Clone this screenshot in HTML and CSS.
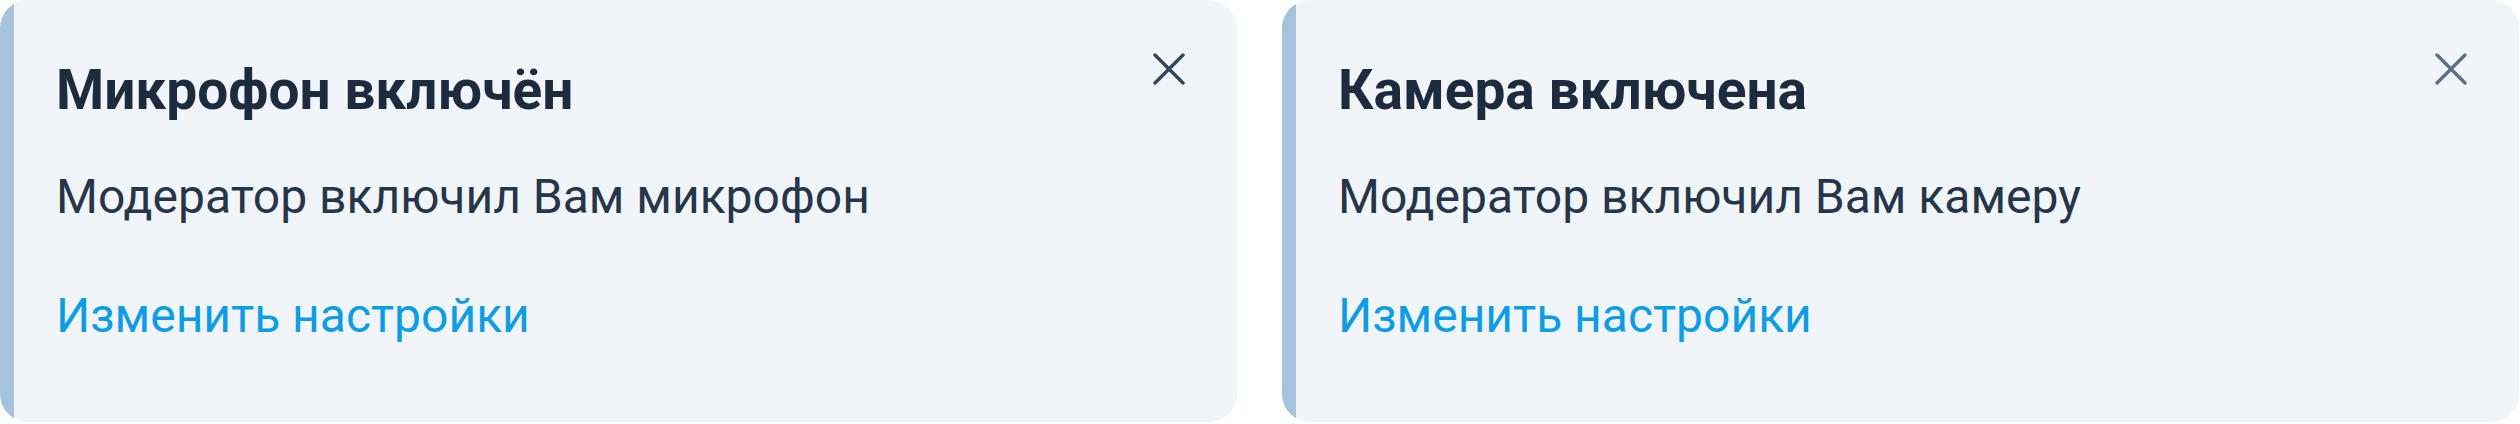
FILE: index.html
```
<!DOCTYPE html>
<html>
	<head>
		<meta charset="utf-8"/>
		<title>Уведомления</title>
		<link rel="stylesheet" href="styles.css">
	</head>
	<body>
		<main class="toasts">
			<div class="toast">
				<div class="toast-head">
					<h2 class="toast-title">Микрофон включён</h2>
					<button type="button" class="toast-close dark" aria-label="Закрыть">
						<svg viewBox="0 0 32 32" width="32" height="32"><path d="M2 2 L30 30 M30 2 L2 30"/></svg>
					</button>
				</div>
				<p class="toast-text">Модератор включил Вам микрофон</p>
				<a class="toast-link" href="#">Изменить настройки</a>
			</div>

			<div class="toast">
				<div class="toast-head">
					<h2 class="toast-title">Камера включена</h2>
					<button type="button" class="toast-close" aria-label="Закрыть">
						<svg viewBox="0 0 32 32" width="32" height="32"><path d="M2 2 L30 30 M30 2 L2 30"/></svg>
					</button>
				</div>
				<p class="toast-text">Модератор включил Вам камеру</p>
				<a class="toast-link" href="#">Изменить настройки</a>
			</div>
		</main>
	</body>
</html>
```
FILE: styles.css
```
body {
	margin: 0;
	background: #fff;
	font-family: Roboto, 'Noto Sans', sans-serif;
}
.toasts {
	display: grid;
	grid-template-columns: 1237px 1237px;
	gap: 45px;
}
.toast {
	height: 422px;
	box-sizing: border-box;
	padding: 58px 52px 0 56px;
	background: linear-gradient(to right, #a7c2dd 14px, #f1f5fa 14px);
	border-radius: 28px;
}
.toast-head {
	display: flex;
	justify-content: space-between;
	align-items: flex-start;
}
.toast-title {
	margin: 0;
	font-size: 55px;
	line-height: 64px;
	font-weight: 700;
	color: #1c2b3d;
}
.toast-close {
	margin-top: -5px;
	padding: 0;
	border: 0;
	background: transparent;
	width: 32px;
	height: 32px;
}
.toast-close svg {
	display: block;
	fill: none;
	stroke: #5d7189;
	stroke-width: 3.4;
	stroke-linecap: round;
}
.toast-close.dark svg {
	stroke: #33465b;
}
.toast-text {
	margin: 47px 0 0;
	font-size: 48px;
	line-height: 56px;
	color: #25364a;
}
.toast-link {
	display: block;
	margin-top: 63px;
	font-size: 48px;
	line-height: 56px;
	color: #0b9de6;
	text-decoration: none;
}
```
